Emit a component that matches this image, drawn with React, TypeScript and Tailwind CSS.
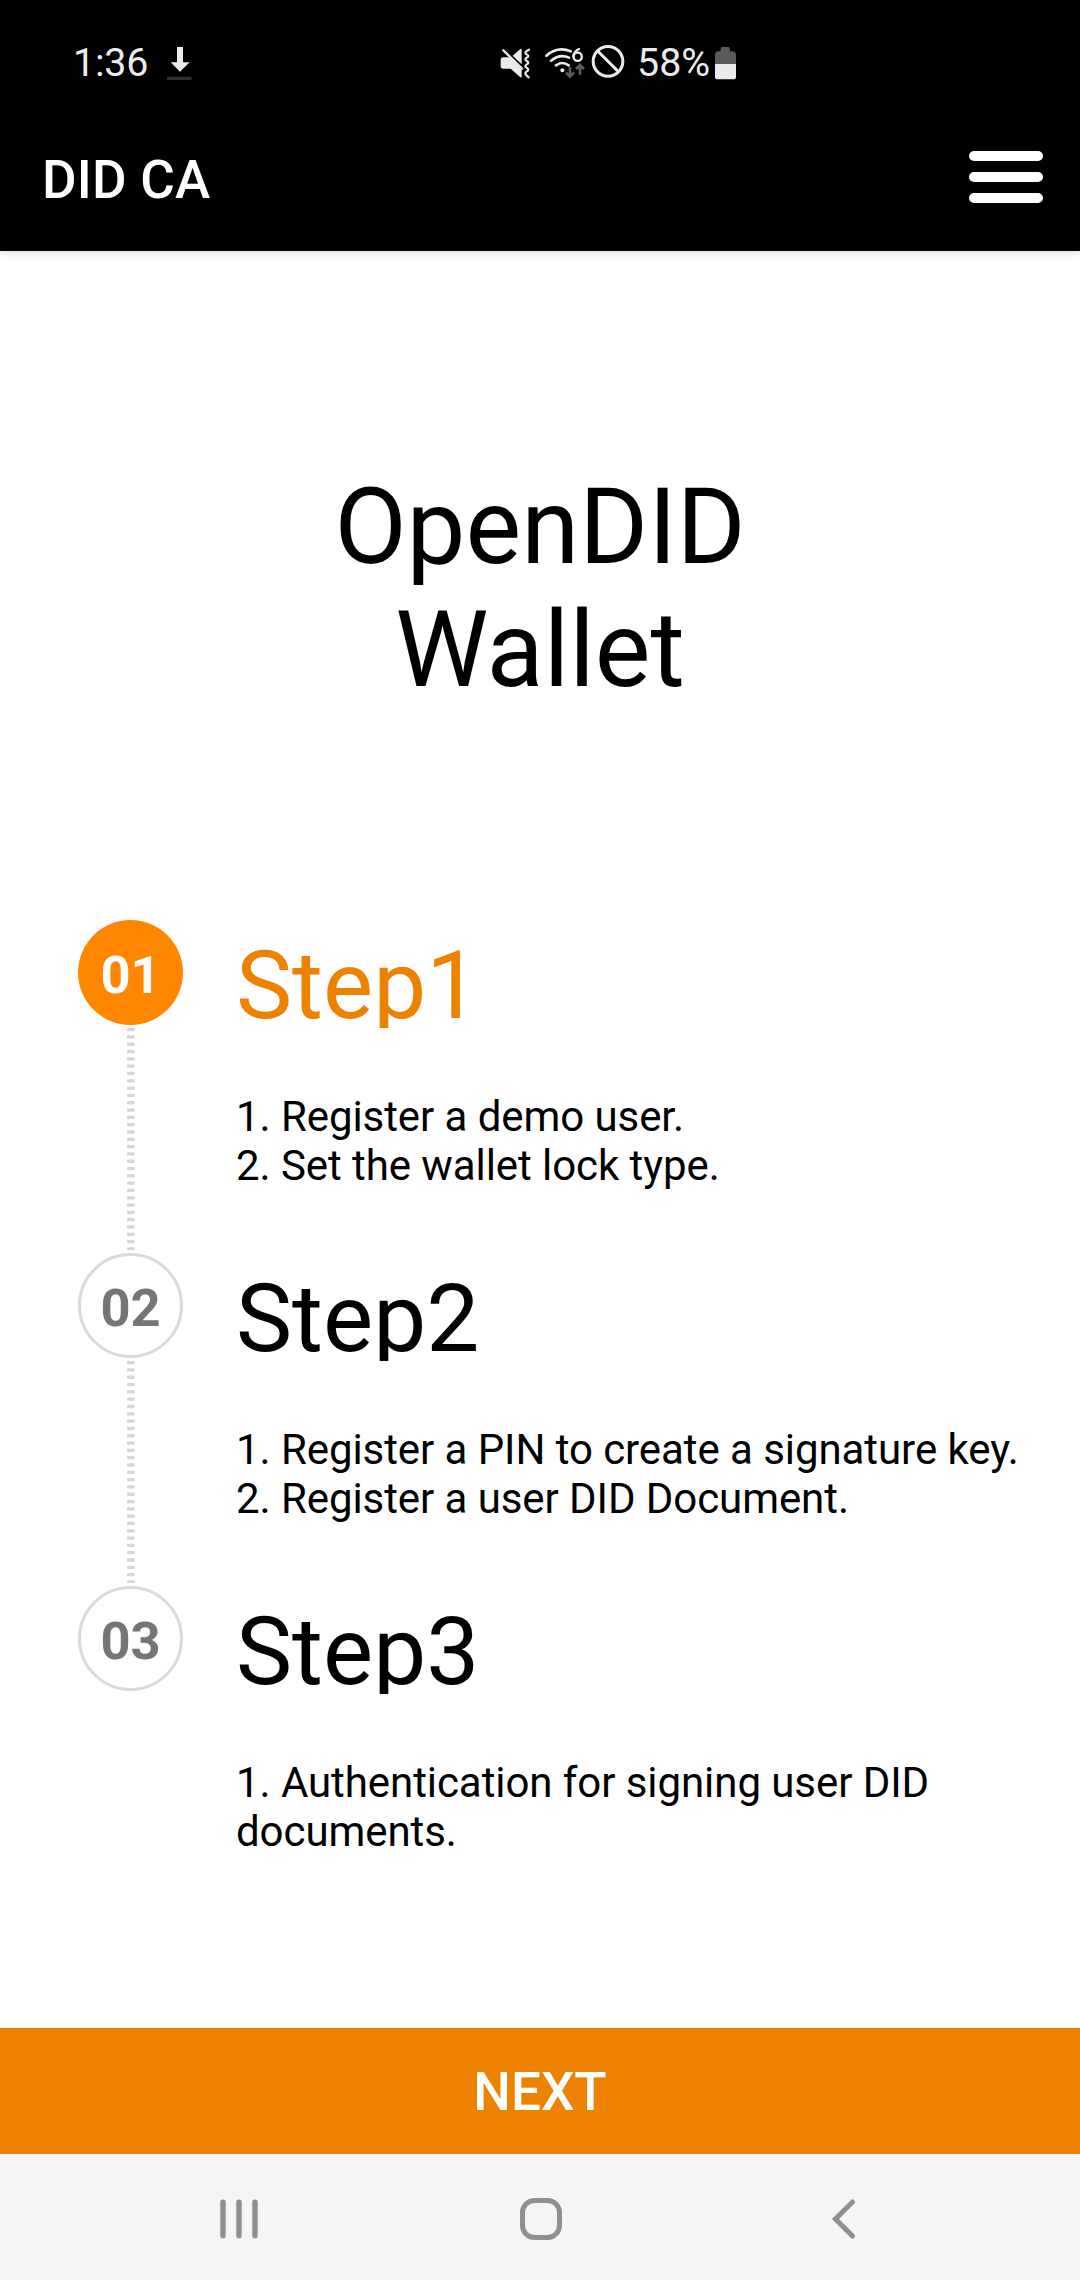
const steps = [
  { no: "01", title: "Step1", lines: ["1. Register a demo user.", "2. Set the wallet lock type."], active: true },
  { no: "02", title: "Step2", lines: ["1. Register a PIN to create a signature key.", "2. Register a user DID Document."], active: false },
  { no: "03", title: "Step3", lines: ["1. Authentication for signing user DID documents."], active: false },
];

function StatusBar() {
  return (
    <div className="flex h-[109px] items-start pl-[73px] pt-[39px] text-[39.4px] leading-[47px] text-[#ebebeb]">
      <span className="w-[75px] tracking-[-0.2px]">1:36</span>
      {/* download */}
      <svg className="ml-[17px] mt-[6px] h-[40px] w-[30px] shrink-0" viewBox="0 0 90 120" fill="#ebebeb">
        <path d="M36 6h18v46h20L45 80 17 52h19z" />
        <rect x="6" y="95" width="74" height="10" rx="2" fill="#2e2e2e" />
      </svg>
      {/* sound off, vibrate */}
      <svg className="ml-[305px] mt-[8px] h-[32px] w-[32px] shrink-0" viewBox="58 51 96 96" fill="#ebebeb">
        <path d="M60 90q0-8 8-8h18l37 36v23q-1 3-4 1L90 116H68q-8 0-8-8z" />
        <path d="M96 77l23-20q4-2 4 2v44z" />
        <path d="M68 61l56 55" fill="none" stroke="#ebebeb" strokeWidth="7" strokeLinecap="round" />
        <path d="M145 59q-11 5-11 9c0 5 9 5 9 10s-9 5-9 10 9 5 9 10-9 5-9 10 9 6 9 11-9 5-9 10q0 5 10 13" fill="none" stroke="#ebebeb" strokeWidth="6.5" strokeLinecap="round" />
      </svg>
      {/* wifi 6 with traffic arrows */}
      <svg className="ml-[12px] mt-[6px] h-[36px] w-[42px] shrink-0" viewBox="192 45 126 108" fill="none" stroke="#ebebeb" strokeWidth="8" strokeLinecap="round">
        <path d="M199 77q34-29 73-13M213 92q27-22 54-9M228 106q19-14 38 0" />
        <circle cx="247" cy="121" r="6" fill="#ebebeb" stroke="none" />
        <path d="M297 57q-14 5-17 21" strokeWidth="7" />
        <circle cx="293" cy="80" r="12.5" strokeWidth="7" />
        <path d="M270 111v29m-12-12l12 12 12-12M300 134v-29m-12 12l12-12 12 12" stroke="#5c5c5c" strokeWidth="8" strokeLinecap="butt" />
      </svg>
      {/* blocked */}
      <svg className="ml-[5px] mt-[5px] h-[34px] w-[34px] shrink-0" viewBox="0 0 102 102" fill="none" stroke="#ebebeb" strokeWidth="9">
        <circle cx="51" cy="52" r="44.5" />
        <path d="M20 21l62 62" />
      </svg>
      <span className="ml-[12px] w-[72px]">58%</span>
      {/* battery */}
      <svg className="ml-[5px] mt-[7px] h-[35px] w-[23px] shrink-0" viewBox="0 0 69 105">
        <path d="M3 54V26q0-7 7-10h10V8q0-5 5-5h18q5 0 5 5v8h10q8 3 8 10v28z" fill="#5a5a5a" />
        <path d="M3 54h63v38q0 8-8 8H11q-8 0-8-8z" fill="#ebebeb" />
      </svg>
    </div>
  );
}

function Marker({ no, active }: { no: string; active: boolean }) {
  return (
    <div
      className={
        "flex h-[105px] w-[105px] shrink-0 items-center justify-center rounded-full text-[52.5px] font-bold leading-none " +
        (active ? "bg-[#ff8700] text-white" : "border-[3px] border-[#dadada] text-[#757575]")
      }
    >
      <span className="mt-[5px]">{no}</span>
    </div>
  );
}

function Connector() {
  return (
    <svg className="ml-[1px] mt-[3px] h-[222px] w-[8px] shrink-0" viewBox="0 0 8 222" fill="#d6d6d6">
      {Array.from({ length: 31 }, (_, i) => (
        <rect key={i} x="0" y={i * 7.31} width="7.8" height="3.3" rx="1.3" />
      ))}
    </svg>
  );
}

export default function App() {
  return (
    <div className="flex h-[2280px] w-[1080px] flex-col overflow-hidden bg-white font-['Roboto',sans-serif] text-black">
      <header className="h-[251px] shrink-0 bg-black shadow-[0_2px_10px_rgba(0,0,0,0.13)]">
        <StatusBar />
        <div className="flex justify-between pl-[42px] pr-[37px] text-white">
          <h1 className="mt-[40px] text-[53px] font-medium leading-[62px] tracking-[0.2px]">DID CA</h1>
          <button className="mt-[42px] flex h-[52px] w-[74px] flex-col justify-between" aria-label="Menu">
            <span className="h-[10px] w-full rounded-full bg-white" />
            <span className="h-[10px] w-full rounded-full bg-white" />
            <span className="h-[10px] w-full rounded-full bg-white" />
          </button>
        </div>
      </header>

      <main className="flex grow flex-col">
        <h2 className="mt-[215px] text-center text-[105px] leading-[123px]">
          OpenDID
          <br />
          Wallet
        </h2>
        <ol className="mt-[208px] flex flex-col pl-[78px]">
          {steps.map((step, i) => (
            <li key={step.no} className="flex h-[333px]">
              <div className="flex w-[105px] shrink-0 flex-col items-center">
                <Marker no={step.no} active={step.active} />
                {i < steps.length - 1 && <Connector />}
              </div>
              <div className="ml-[53px] w-[800px]">
                <h3 className={"mt-[10px] h-[98px] overflow-hidden text-[94.5px] leading-[111px] " + (step.active ? "text-[#ed8200]" : "")}>
                  {step.title}
                </h3>
                <div className="mt-[64px] text-[42px] leading-[49px] tracking-[-0.07px]">
                  {step.lines.map((line) => (
                    <p key={line}>{line}</p>
                  ))}
                </div>
              </div>
            </li>
          ))}
        </ol>
      </main>

      <button className="flex h-[126px] shrink-0 items-center justify-center bg-[#ed8200] pt-[3px] text-[53px] font-medium leading-none text-white">
        NEXT
      </button>
      <nav className="flex h-[126px] shrink-0 items-start bg-[#f5f5f5] pt-[43px]">
        <svg className="ml-[219px] h-[44px] w-[40px]" viewBox="0 0 40 44" stroke="#909090" strokeWidth="5.4" strokeLinecap="round">
          <path d="M4 5.2v33.6M20 5.2v33.6M36 5.2v33.6" />
        </svg>
        <svg className="ml-[260px] h-[44px] w-[44px]" viewBox="0 0 44 44" fill="none" stroke="#909090" strokeWidth="5">
          <rect x="3.5" y="3.5" width="37" height="37" rx="12" />
        </svg>
        <svg className="ml-[266px] h-[44px] w-[30px]" viewBox="0 0 30 44" fill="none" stroke="#909090" strokeWidth="5" strokeLinecap="round">
          <path d="M23.5 5L6.5 22l17 17" />
        </svg>
      </nav>
    </div>
  );
}
